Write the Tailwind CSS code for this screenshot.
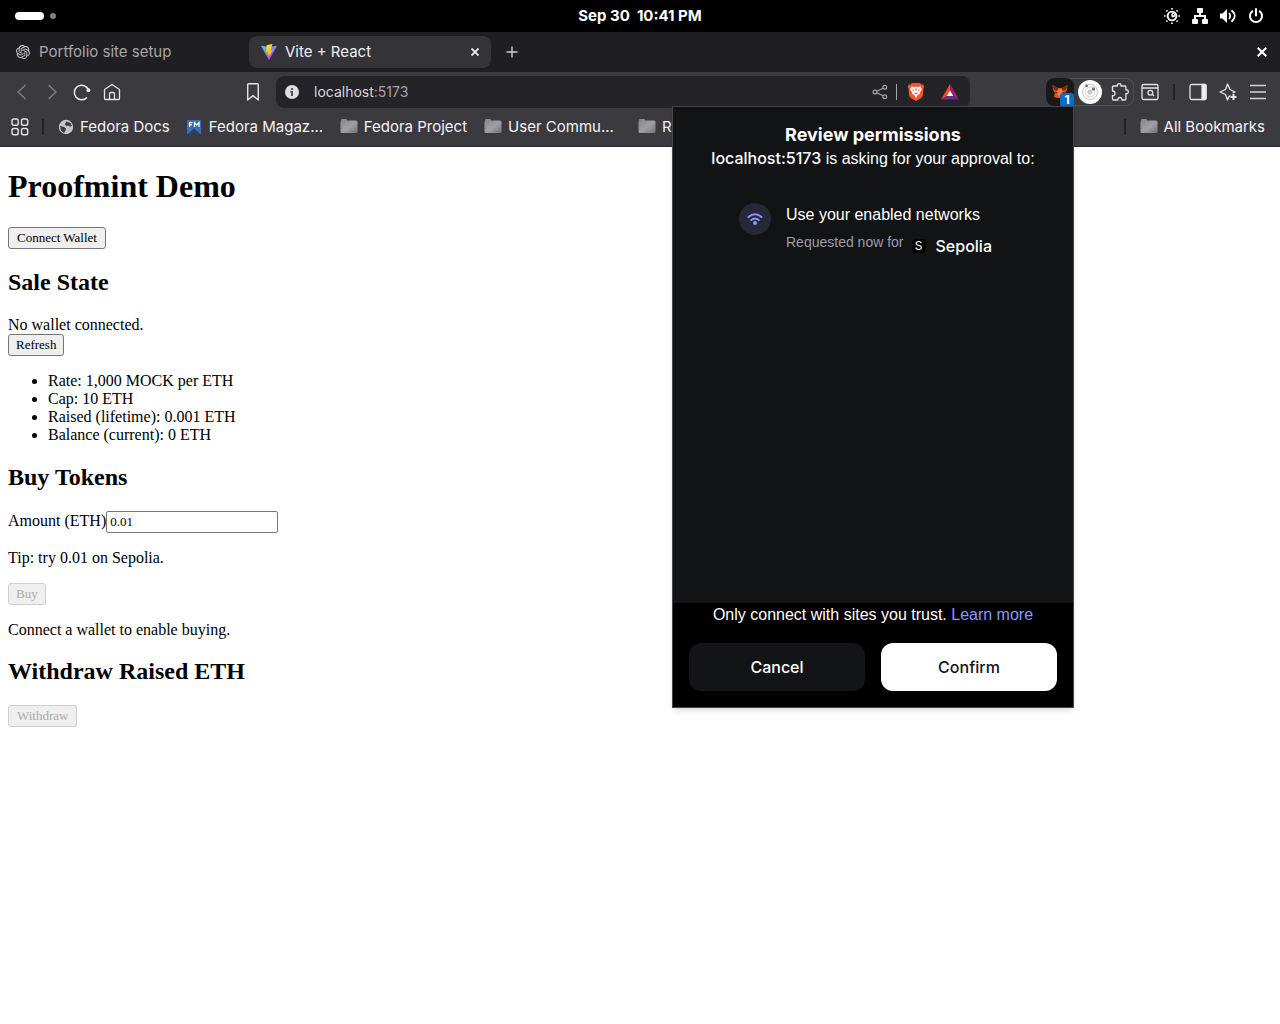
<!DOCTYPE html>
<html lang="en">
<head>
<meta charset="utf-8">
<title>Vite + React</title>
<script src="https://cdn.jsdelivr.net/npm/@tailwindcss/browser@4"></script>
</head>
<body class="relative min-h-screen bg-white text-black font-['Inter',sans-serif]">
<svg class="absolute w-0 h-0" aria-hidden="true">
  <defs>
    <linearGradient id="folderFill" x1="0" y1="0" x2="1" y2="1"><stop offset="0" stop-color="#85858b"/><stop offset=".5" stop-color="#a0a0a6"/><stop offset="1" stop-color="#737378"/></linearGradient>
    <symbol id="folder" viewBox="0 0 18 16"><path d="M1 2V1q0-1 1-1h4q1 0 1 1v1z" fill="#8f8d86"/><rect x=".5" y="1.500" width="17" height="12.500" rx="1.500" fill="url(#folderFill)"/></symbol>
  </defs>
</svg>

<!-- System bar -->
<header class="grid grid-cols-3 items-center h-8 bg-black text-white px-[15px]">
  <div class="flex items-center gap-1.5">
    <span class="w-[29px] h-2 rounded-full bg-white"></span>
    <span class="w-1.5 h-1.5 rounded-full bg-[#808080]"></span>
  </div>
  <time class="text-center text-[15px] leading-5 font-bold whitespace-pre">Sep 30  10:41 PM</time>
  <div class="flex items-center justify-end gap-3 pr-px">
    <svg class="w-4 h-4" viewBox="0 0 16 16" fill="none" stroke="#fff"><circle cx="8" cy="8" r="5.300" fill="#fff" stroke="none"/><circle cx="8" cy="8" r="3.400" fill="#000" stroke="none"/><path d="M8 4.600A3.400 3.400 0 0 1 11.400 8a3.400 3.400 0 0 1-3.400 1.300Q6.500 8 8 4.600z" fill="#fff" stroke="none"/><circle cx="9.400" cy="6.600" r=".8" fill="#000" stroke="none"/><path d="M8 0v1.600M8 14.400V16M0 8h1.600M14.400 8H16M2.300 2.300l1.100 1.100M12.600 12.600l1.100 1.100M2.300 13.700l1.100-1.100M12.600 3.400l1.100-1.100" stroke-width="1.700"/></svg>
    <svg class="w-4 h-4" viewBox="0 0 16 16" fill="#fff"><rect x="5" y="0" width="6" height="5" rx="1"/><rect x="0" y="11" width="6" height="5" rx="1"/><rect x="10" y="11" width="6" height="5" rx="1"/><path d="M7 4h2v3h5v5h-2V9H4v3H2V7h5z"/></svg>
    <svg class="w-4 h-4" viewBox="0 0 16 16" fill="none" stroke="#fff" stroke-width="1.800"><path d="M0 5.500h2.500L7 1v14l-4.500-4.500H0z" fill="#fff" stroke="none"/><path d="M9 5q2.500 3 0 6M11.500 2.300q6.500 5.700 0 11.400" /></svg>
    <svg class="w-4 h-4" viewBox="0 0 16 16" fill="none" stroke="#fff" stroke-width="2" stroke-linecap="round"><path d="M8 1v6.500M4.300 3.300a6 6 0 1 0 7.400 0"/></svg>
  </div>
</header>

<!-- Tab strip -->
<nav class="flex items-center h-10 bg-[#1f1e23] pl-[7px] pr-2.5 text-[15px] leading-5" aria-label="Tabs">
  <a href="#" class="flex items-center gap-[9px] w-[242px] h-8 px-[9px] text-[#a8a8ab]">
    <svg class="w-3.5 h-3.5" viewBox="0 0 24 24" fill="#d4d4d6"><path d="M22.280 9.820a5.980 5.980 0 0 0-.520-4.910 6.050 6.050 0 0 0-6.510-2.900A6.070 6.070 0 0 0 4.980 4.180a5.980 5.980 0 0 0-4 2.900 6.050 6.050 0 0 0 .740 7.100 5.980 5.980 0 0 0 .510 4.910 6.050 6.050 0 0 0 6.510 2.900A5.980 5.980 0 0 0 13.260 24a6.060 6.060 0 0 0 5.770-4.210 5.990 5.990 0 0 0 4-2.900 6.060 6.060 0 0 0-.750-7.070zm-9.020 12.610a4.480 4.480 0 0 1-2.880-1.040l.140-.080 4.780-2.760a.8.8 0 0 0 .390-.680v-6.740l2.020 1.170v5.640a4.500 4.500 0 0 1-4.450 4.490zM3.600 18.300a4.470 4.470 0 0 1-.530-3.010l.140.080 4.780 2.760a.77.77 0 0 0 .780 0l5.840-3.370v2.330L9.740 19.950A4.500 4.500 0 0 1 3.600 18.300zM2.340 7.900a4.490 4.490 0 0 1 2.370-1.970v5.680a.77.77 0 0 0 .390.680l5.810 3.350-2.020 1.170-4.860-2.780A4.500 4.500 0 0 1 2.340 7.900zm16.600 3.860-5.840-3.390 2.020-1.160 4.860 2.790a4.490 4.490 0 0 1-.680 8.100v-5.680a.79.79 0 0 0-.360-.660zm2.010-3.020-.140-.090-4.770-2.780a.78.78 0 0 0-.790 0L9.410 9.230V6.900l4.890-2.790a4.500 4.500 0 0 1 6.650 4.630zM8.310 12.860 6.290 11.700V6.070a4.500 4.500 0 0 1 7.380-3.450l-.140.080-4.780 2.760a.8.8 0 0 0-.400.680zm1.090-2.360L12 9l2.610 1.500v3L12 15l-2.610-1.500z"/></svg>
    <span>Portfolio site setup</span>
  </a>
  <div class="flex items-center w-[242px] h-8 rounded-lg bg-[#343338] pl-3 pr-2.5 text-[#f0f0f2]">
    <a href="#" class="flex flex-1 items-center gap-2">
      <svg class="w-4 h-4" viewBox="0 0 32 32"><defs><linearGradient id="viteA" x1="0" y1="0" x2=".6" y2="1"><stop offset="0" stop-color="#41d1ff"/><stop offset="1" stop-color="#bd34fe"/></linearGradient><linearGradient id="viteB" x1="0" y1="0" x2="0" y2="1"><stop offset="0" stop-color="#ffea83"/><stop offset=".1" stop-color="#ffdd35"/><stop offset="1" stop-color="#ffa800"/></linearGradient></defs><path d="M0 3.500 16 6l16-2.500L17 31q-1 1.500-2 0z" fill="url(#viteA)"/><path d="M23 0 11 2.400 10 17l4-1-1.200 5.500 3-1L14.500 27 24 12l-4.500.8L21 6z" fill="url(#viteB)"/></svg>
      <span>Vite + React</span>
    </a>
    <button aria-label="Close tab" class="flex items-center justify-center w-3 h-4"><svg class="w-2 h-2" viewBox="0 0 8 8" stroke="#f0f0f2" stroke-width="1.700"><path d="M.5.5l7 7M7.500.5l-7 7"/></svg></button>
  </div>
  <button aria-label="New tab" class="ml-[15px]"><svg class="w-3 h-3" viewBox="0 0 12 12" stroke="#d0d0d2" stroke-width="1.400"><path d="M6 .5v11M.5 6h11"/></svg></button>
  <button aria-label="Close window" class="ml-auto flex items-center justify-center w-4 h-4"><svg class="w-2.5 h-2.5" viewBox="0 0 10 10" stroke="#fff" stroke-width="2"><path d="M.7.7l8.600 8.600M9.300.7.7 9.300"/></svg></button>
</nav>

<!-- Toolbar -->
<div class="flex items-center h-10 bg-[#3b3a3f]">
  <div class="flex items-center w-[276px] pl-[7px] pr-2">
    <button aria-label="Back" class="flex justify-center w-[30px]"><svg class="w-4 h-4" viewBox="0 0 16 16" fill="none" stroke="#838287" stroke-width="1.300"><path d="M11.500 1 4 8l7.500 7"/></svg></button>
    <button aria-label="Forward" class="flex justify-center w-[30px]"><svg class="w-4 h-4" viewBox="0 0 16 16" fill="none" stroke="#838287" stroke-width="1.300"><path d="M4.500 1 12 8l-7.500 7"/></svg></button>
    <button aria-label="Reload" class="flex justify-center w-[30px]"><svg class="w-[18px] h-[18px]" viewBox="0 0 18 18" fill="none" stroke="#f0f0f2" stroke-width="1.500"><path d="M15.500 7A7.300 7.300 0 1 0 14 14.500"/><circle cx="15.400" cy="7.300" r="2" fill="#f0f0f2" stroke="none"/></svg></button>
    <button aria-label="Home" class="flex justify-center w-[30px]"><svg class="w-[18px] h-[18px]" viewBox="0 0 18 18" fill="none" stroke="#e4e4e6" stroke-width="1.300" stroke-linejoin="round"><path d="M1.500 6.500 9 1.500l7.500 5v9q0 1-1 1h-13q-1 0-1-1zM6.500 16.500V11q0-1.500 1.500-1.500h2q1.500 0 1.500 1.500v5.500"/></svg></button>
    <button aria-label="Bookmark this page" class="flex justify-center w-[30px] ml-auto"><svg class="w-[18px] h-[18px]" viewBox="0 0 18 18" fill="none" stroke="#e4e4e6" stroke-width="1.400" stroke-linejoin="round"><path d="M3.700 1.500q0-.8.8-.8h9q.8 0 .8.800v15.500L9 12.600 3.700 17z"/></svg></button>
  </div>
  <div class="flex flex-1 items-center h-8 rounded-lg bg-[#242328] pl-2 pr-[11px]">
    <svg class="w-4 h-4 shrink-0" viewBox="0 0 16 16"><circle cx="8" cy="8" r="7" fill="#dedee2"/><path d="M7 4h2v2H7zM6.300 7H9v5H7V8.500h-.7z" fill="#55545a"/></svg>
    <a href="#" class="ml-3.5 flex-1 text-[14px] leading-5 text-[#d6d6da]">localhost<span class="text-[#a5a4ab]">:5173</span></a>
    <button aria-label="Share" class="mr-2"><svg class="w-4 h-4" viewBox="0 0 16 16" fill="none" stroke="#a6a5ac" stroke-width="1.200"><circle cx="3" cy="8" r="1.900"/><circle cx="12.800" cy="3.300" r="1.900"/><circle cx="12.800" cy="12.700" r="1.900"/><path d="m4.800 7.200 6.200-3M4.800 8.800l6.200 3"/></svg></button>
    <span class="w-px h-4 bg-[#a6a5ac]"></span>
    <button aria-label="Brave Shields" class="ml-2.5"><svg class="w-[18px] h-[18px]" viewBox="0 0 18 18"><path d="M5 0h8l1.500 1.500 1.800 0 .9 2.500-.7 1L16 12q-.5 2-2.500 3.500L9 18l-4.500-2.500Q2.500 14 2 12L1.500 5 .8 4l.9-2.500h1.800z" fill="#fb542b"/><path d="m4.500 3.500 3 .6 1.500-.5 1.500.5 3-.6 1.500 3-2.300 3 .3 1.500-2.200.8L9 15l-1.800-3.200-2.200-.8.3-1.500-2.300-3z" fill="#fff"/><path d="m5 6.300 2.500.4-.8 1.500zM13 6.300l-2.500.4.800 1.500zM7 10.300 9 9.500l2 .8-2 1.200zM8.500 4.500h1v3h-1z" fill="#fb542b"/></svg></button>
    <button aria-label="Rewards" class="ml-4"><svg class="w-[18px] h-[18px]" viewBox="0 0 18 18"><path d="M9 1 0 16.500 6 13 9 8z" fill="#ff4724"/><path d="m9 1 9 15.500L12 13 9 8z" fill="#9e1f63"/><path d="M0 16.500h18L12 13H6z" fill="#662d91"/><path d="m9 7.500 3.300 5.500H5.700z" fill="#fff"/></svg></button>
  </div>
  <div class="flex items-center justify-end w-[310px] pr-[7px]">
    <div class="flex items-center h-7 rounded-lg ring-1 ring-inset ring-[#504f54]">
      <button aria-label="MetaMask, 1 notification" class="relative flex items-center justify-center w-7 h-7 rounded-lg bg-[#19181a]">
        <svg class="w-4 h-4" viewBox="0 0 16 16"><path d="m.5 1 5.500 3h4l5.500-3-.5 5-2 3 1 4-3.500 1H5.500L2 13l1-4-2-3z" fill="#e2561f"/><path d="m.5 1 5.500 3L7 7 2 6zM15.500 1 10 4 9 7l5-1z" fill="#8c2410"/><path d="M6.500 5h3L12 9l-2.500 3h-3L4 9z" fill="#ff7a32"/><path d="m3.500 7.500 3 1.500-3 .5zM12.500 7.500l-3 1.500 3 .5z" fill="#5c2416"/></svg>
        <span class="absolute right-0 -bottom-px flex items-center justify-center w-3.5 h-3.5 rounded-[3px] bg-[#0070c9] text-white text-[12px] leading-3 font-bold">1</span>
      </button>
      <button aria-label="Extension" class="flex justify-center w-8"><svg class="w-6 h-6" viewBox="0 0 24 24" fill="none" stroke="#c4c4c4"><circle cx="12" cy="12" r="12" fill="#fff" stroke="none"/><circle cx="12" cy="12" r="7.500"/><circle cx="12" cy="12" r="4.800" stroke="#d4d4d4"/><circle cx="12" cy="12" r="2.200" fill="#ccc"/><circle cx="8.500" cy="5.800" r="1.500" fill="#777" stroke="none"/><circle cx="15.500" cy="9" r="1.700" fill="#777" stroke="none"/></svg></button>
      <button aria-label="Extensions" class="flex justify-center w-7"><svg class="w-[18px] h-[18px]" viewBox="0 0 18 18" fill="none" stroke="#e4e4e6" stroke-width="1.300" stroke-linejoin="round"><path d="M2.500 3h4q-.7-2.300 1.700-2.300T9.900 3h4q1 0 1 1v3q2.400-.5 2.400 1.800t-2.400 1.800V16q0 1-1 1h-3q.2-2.500-2-2.500t-2 2.500H2.500q-1 0-1-1v-3.500Q4 13 4 10.500T1.500 8V4q0-1 1-1z"/></svg></button>
    </div>
    <button aria-label="Search tabs" class="flex justify-center w-8"><svg class="w-[18px] h-[18px]" viewBox="0 0 18 18" fill="none" stroke="#e4e4e6" stroke-width="1.300"><rect x="1" y="1.500" width="16" height="15" rx="1.500"/><path d="M1 5h16M11.200 11.200 13 13"/><circle cx="9.300" cy="9.700" r="2.400"/></svg></button>
    <span class="w-0.5 h-4 mx-[7px] bg-[#222126]"></span>
    <button aria-label="Sidebar" class="flex justify-center w-8"><svg class="w-[18px] h-[18px]" viewBox="0 0 18 18" fill="none" stroke="#e4e4e6" stroke-width="1.300"><rect x="1" y="1.500" width="16" height="15" rx="1.500"/><path d="M13 1.500h3q1 0 1 1v13q0 1-1 1h-3z" fill="#f0f0f2"/></svg></button>
    <button aria-label="Assistant" class="flex justify-center w-7"><svg class="w-[18px] h-[18px]" viewBox="0 0 18 18" fill="none" stroke="#e4e4e6" stroke-width="1.300" stroke-linejoin="round"><path d="M11.500 12.500 10 13.500 8.500 17 6.500 11.500 1 9l5.500-2.500L8.500 1 11 6.500 16 9l-2.500 1"/><path d="M14.500 11v6M11.500 14h6" stroke-width="2"/></svg></button>
    <button aria-label="Menu" class="flex justify-center w-[31px]"><svg class="w-[18px] h-[18px]" viewBox="0 0 18 18" stroke="#d4d4d6" stroke-width="1.400"><path d="M1 2.500h16M1 9h16M1 15.500h16"/></svg></button>
  </div>
</div>

<!-- Bookmarks bar -->
<nav class="flex items-center h-[35px] bg-[#3b3a3f] border-b border-[#29282c] pb-1 pl-[11px] pr-[15px] text-[15px] leading-5 text-[#f4f4f6] whitespace-nowrap" aria-label="Bookmarks">
  <button aria-label="Apps"><svg class="w-[18px] h-[18px]" viewBox="0 0 18 18" fill="none" stroke="#e4e4e6" stroke-width="1.400"><rect x="1" y="1" width="6.200" height="6.200" rx="1.800"/><rect x="10.500" y="1" width="6.200" height="6.200" rx="1.800"/><rect x="1" y="10.500" width="6.200" height="6.200" rx="1.800"/><rect x="10.500" y="10.500" width="6.200" height="6.200" rx="1.800"/></svg></button>
  <span class="w-0.5 h-4 ml-[13px] mr-3.5 bg-[#222126]"></span>
  <div class="flex items-center gap-[17px]">
    <a href="#" class="flex items-center gap-1.5"><svg class="w-4 h-4" viewBox="0 0 16 16"><circle cx="8" cy="8" r="7.200" fill="#c4c4c9"/><path d="M8.500 2.500 12.500 4l1.500 3-2 .5-2-1-2 .5-1-2zM2 7l4 1 2 1.500-.5 2L6 14 3 11.500z" fill="#3b3a3f"/></svg><span>Fedora Docs</span></a>
    <a href="#" class="flex items-center gap-1.5 w-[136px]"><svg class="w-4 h-4 shrink-0" viewBox="0 0 16 16"><path d="M0 1h14v14h-1L7 9.500 1 15H0z" fill="#3c6eb4"/><path d="M1 15l6-5.500 6 5.500h-3L7 12.500 4 15z" fill="#294172"/><path d="M2.500 8V3.500h3M2.500 5.700H5M7.500 8V3.500L9.700 6 12 3.500V8" fill="none" stroke="#fff" stroke-width="1.200"/></svg><span>Fedora Magaz...</span></a>
    <a href="#" class="flex items-center gap-1.5"><svg class="w-[18px] h-4 shrink-0"><use href="#folder"/></svg><span>Fedora Project</span></a>
    <a href="#" class="flex items-center gap-1.5 w-[137px]"><svg class="w-[18px] h-4 shrink-0"><use href="#folder"/></svg><span>User Commu...</span></a>
    <a href="#" class="flex items-center gap-1.5"><svg class="w-[18px] h-4 shrink-0"><use href="#folder"/></svg><span>R</span></a>
  </div>
  <span class="w-0.5 h-4 ml-auto mr-3.5 bg-[#222126]"></span>
  <a href="#" class="flex items-center gap-1.5"><svg class="w-[18px] h-4 shrink-0"><use href="#folder"/></svg><span>All Bookmarks</span></a>
</nav>

<!-- Web page -->
<main class="flex flex-col items-start px-2 pt-[21px] font-['Liberation_Serif',serif] text-[16px] leading-[18px]">
  <h1 class="text-[32px] leading-[37px] font-bold mb-[22px]">Proofmint Demo</h1>
  <button class="h-[22px] px-2 border border-[#767676] rounded-[3px] bg-[#efefef] text-[13px] leading-4">Connect Wallet</button>
  <h2 class="text-[24px] leading-[27px] font-bold my-5">Sale State</h2>
  <p>No wallet connected.</p>
  <button class="h-[22px] px-[7px] border border-[#767676] rounded-[3px] bg-[#efefef] text-[13px] leading-4">Refresh</button>
  <ul class="list-disc pl-10 mt-4 mb-5">
    <li>Rate: 1,000 MOCK per ETH</li>
    <li>Cap: 10 ETH</li>
    <li>Raised (lifetime): 0.001 ETH</li>
    <li>Balance (current): 0 ETH</li>
  </ul>
  <h2 class="text-[24px] leading-[27px] font-bold mb-5">Buy Tokens</h2>
  <div class="flex items-baseline">
    <label for="amount">Amount (ETH)</label>
    <input id="amount" type="text" value="0.01" class="w-[172px] h-[22px] px-[3px] border border-[#767676] rounded-[2px] text-[13px] leading-4">
  </div>
  <p class="my-4">Tip: try 0.01 on Sepolia.</p>
  <button disabled class="h-[22px] px-[7px] border border-[#cfcfcf] rounded-[3px] bg-[#efefef] text-[#ababab] text-[13px] leading-4">Buy</button>
  <p class="mt-4">Connect a wallet to enable buying.</p>
  <h2 class="text-[24px] leading-[27px] font-bold mt-[19px] mb-5">Withdraw Raised ETH</h2>
  <button disabled class="h-[22px] px-2 border border-[#cfcfcf] rounded-[3px] bg-[#efefef] text-[#ababab] text-[13px] leading-4">Withdraw</button>
</main>

<!-- Wallet popup -->
<section role="dialog" aria-labelledby="dialog-title" class="absolute top-[106px] right-[206px] flex flex-col w-[402px] h-[602px] border border-[#46454c] bg-[#121314] text-white text-[16px] leading-6 shadow-md">
  <div class="pt-4 text-center">
    <h2 id="dialog-title" class="text-[18px] font-bold">Review permissions</h2>
    <p class="h-6 leading-[22px] font-['Liberation_Sans',sans-serif]"><span class="font-['Inter',sans-serif] font-medium">localhost:5173</span> is asking for your approval to:</p>
  </div>
  <div class="flex gap-[15px] mt-8 pl-[66px]">
    <span class="flex items-center justify-center w-8 h-8 rounded-full bg-[#262838]"><svg class="w-4 h-4" viewBox="0 0 16 16" fill="none" stroke="#8b99ff" stroke-width="2" stroke-linecap="round"><path d="M1.500 6Q8 .5 14.500 6M4.300 9q3.700-3 7.400 0"/><circle cx="8" cy="12" r="1" fill="#8b99ff"/></svg></span>
    <div class="flex flex-col gap-[7px]">
      <p class="font-['Liberation_Sans',sans-serif]">Use your enabled networks</p>
      <div class="flex items-center">
        <span class="font-['Liberation_Sans',sans-serif] text-[14px] leading-4 pb-2 text-[#9b9dab]">Requested now for</span>
        <span class="flex items-center justify-center w-3.5 h-3.5 ml-2 rounded bg-black text-[12px] leading-3">S</span>
        <span class="ml-2.5 font-medium">Sepolia</span>
      </div>
    </div>
  </div>
  <footer class="mt-auto bg-black px-4 pb-4">
    <p class="font-['Liberation_Sans',sans-serif] text-center mb-4">Only connect with sites you trust. <a href="#" class="text-[#8b99ff]">Learn more</a></p>
    <div class="grid grid-cols-2 gap-4 font-medium">
      <button class="h-12 rounded-xl bg-[#131416]">Cancel</button>
      <button class="h-12 rounded-xl bg-white text-[#121314]">Confirm</button>
    </div>
  </footer>
</section>
</body>
</html>
